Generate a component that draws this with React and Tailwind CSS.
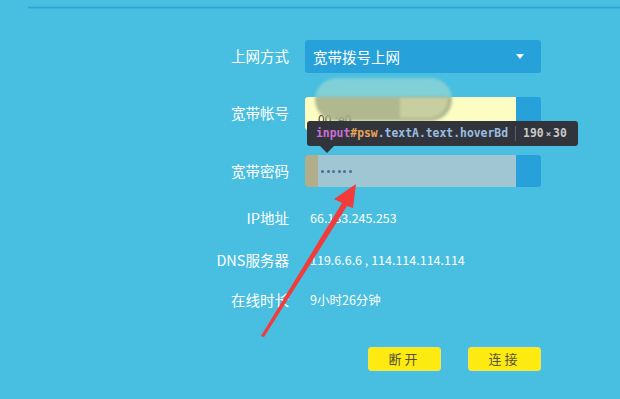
import React from 'react';

const font = { fontFamily: '"Noto Sans CJK SC", "Noto Sans", sans-serif' };

const Label = ({ children }) => (
  <div className="w-[289px] shrink-0 whitespace-nowrap text-right text-[14.5px] leading-none text-white">{children}</div>
);

const InfoRow = ({ label, value, className }) => (
  <div className={`flex h-[20px] items-center gap-[21px] ${className}`}>
    <Label>{label}</Label>
    <div className="text-[12.5px] leading-none text-white">{value}</div>
  </div>
);

export default function App() {
  return (
    <div className="relative h-[399px] w-[620px] overflow-hidden bg-[#48bee0] pt-[6px]" style={font}>
      {/* top rule */}
      <div className="ml-[28px] h-[3px] border-y border-[#3fb3dc] bg-[#2ea4d8]" />

      <div className="mt-[31px] flex flex-col">
        {/* connection type */}
        <div className="flex h-[33px] items-center gap-4">
          <Label>上网方式</Label>
          <div className="flex h-full w-[236px] items-center justify-between rounded-[3px] bg-[#26a1da] pl-[8px] pr-[17px] text-[14.5px] text-white">
            <span>宽带拨号上网</span>
            <svg width="8" height="5" viewBox="0 0 8 5"><polygon points="0,0 8,0 4,5" fill="#fff" /></svg>
          </div>
        </div>

        {/* account */}
        <div className="mt-[24px] flex h-[33px] items-center gap-4">
          <Label>宽带帐号</Label>
          <div className="flex h-full w-[236px] rounded-[3px] bg-[#26a1da]">
            <div className="flex h-full w-[211px] items-end rounded-l-[3px] bg-[#fbfdc3] pb-[5px] pl-[13px] text-[12px] leading-none text-[#3a3a30]">
              00.:e0<span className="ml-[28px]">.</span>
            </div>
          </div>
        </div>

        {/* password */}
        <div className="mt-[25px] flex h-[32px] items-center gap-4">
          <Label>宽带密码</Label>
          <div className="flex h-full w-[236px] rounded-[3px] bg-[#28a1da]">
            <div className="h-full w-[13px] rounded-l-[3px] bg-[#b2ae8b]" />
            <div className="flex h-full w-[198px] items-center gap-[2.6px] bg-[#a0c6d4] pl-[3px] pt-[1px]">
              {[0, 1, 2, 3, 4, 5].map((i) => (
                <span key={i} className="h-[3px] w-[3px] rounded-full bg-[#4d6e8c]" />
              ))}
            </div>
          </div>
        </div>

        <InfoRow className="mt-[21px]" label="IP地址" value="66.183.245.253" />
        <InfoRow className="mt-[22px]" label="DNS服务器" value="119.6.6.6 , 114.114.114.114" />
        <InfoRow className="mt-[20px]" label="在线时长" value="9小时26分钟" />

        {/* actions */}
        <div className="mt-[37px] flex w-[541px] justify-end gap-[27px]">
          <button className="h-[24px] w-[73px] rounded-[3px] border border-[#efe45c] bg-[#fcea10] text-[13px] tracking-[3px] text-[#55523a]">断开</button>
          <button className="h-[24px] w-[73px] rounded-[3px] border border-[#efe45c] bg-[#fcea10] text-[13px] tracking-[3px] text-[#55523a]">连接</button>
        </div>
      </div>

      {/* blurred privacy blob */}
      <div className="absolute left-[315px] top-[78px] h-[43px] w-[137px] rounded-[22px] bg-[linear-gradient(to_bottom,#80d0d7_45%,rgba(168,176,136,0.9)_45%)] blur-[1.5px]" />
      <div className="absolute left-[400px] top-[98px] h-[20px] w-[48px] rounded-br-[20px] bg-[#cfd3a5]/80 blur-[1.5px]" />

      {/* devtools tooltip */}
      <div className="absolute left-[307px] top-[121px] flex h-[25px] items-center whitespace-nowrap rounded-[3px] bg-[#31343b] pl-[9px] pr-[11px] text-[11.4px] font-bold leading-none" style={{ fontFamily: '"DejaVu Sans Mono", "Liberation Mono", monospace' }}>
        <span className="text-[#c96fd6]">input</span>
        <span className="text-[#e8a25a]">#psw</span>
        <span className="text-[#9bbde0]">.textA.text.hoverBd</span>
        <span className="mx-[7px] h-[15px] w-px bg-[#5d6068]" />
        <span className="text-[#c9c9c9]">190<span className="mx-[2px] text-[9px]">×</span>30</span>
        <div className="absolute left-[13px] top-[25px] h-0 w-0 border-x-[7px] border-t-[7px] border-x-transparent border-t-[#31343b]" />
      </div>

      {/* red arrow */}
      <svg className="absolute left-0 top-0" width="620" height="399" viewBox="0 0 620 399">
        <polygon points="261,336 342,203 334,199 356,184 353,208 347,206 264,337" fill="#f23b3b" />
      </svg>
    </div>
  );
}
